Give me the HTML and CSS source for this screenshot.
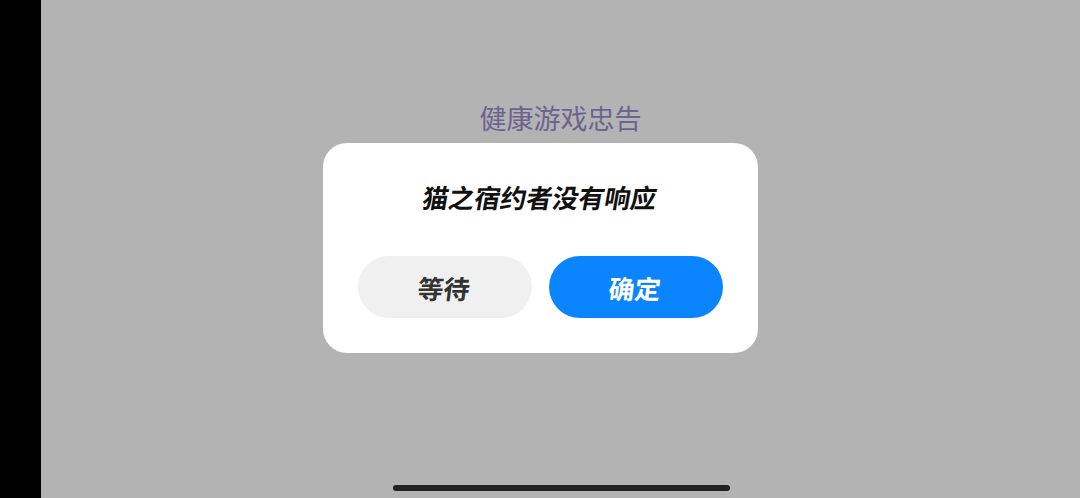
FILE: index.html
```html
<!DOCTYPE html>
<html lang="zh">
<head>
<meta charset="utf-8">
<link rel="stylesheet" href="styles.css">
</head>
<body>
<div class="screen">
  <div class="side"></div>
  <div class="main">
    <div class="heading">健康游戏忠告</div>
    <div class="spacer"></div>
    <div class="home-bar"></div>
  </div>
</div>
<div class="overlay">
  <div class="dialog">
    <div class="dialog-title"><span class="slant">猫之宿约者没有响应</span></div>
    <div class="actions">
      <button class="btn btn-wait"><span class="slant-sm">等待</span></button>
      <button class="btn btn-ok"><span class="slant-sm">确定</span></button>
    </div>
  </div>
</div>
</body>
</html>
```

FILE: styles.css
```css
html, body {
  margin: 0;
  padding: 0;
  width: 1080px;
  height: 498px;
  overflow: hidden;
  font-family: "Noto Sans CJK SC", "Noto Sans", sans-serif;
}
.screen {
  display: flex;
  width: 1080px;
  height: 498px;
  background: #b3b3b3;
}
.side {
  width: 41px;
  background: #000;
  flex: none;
}
.main {
  flex: 1;
  display: flex;
  flex-direction: column;
  align-items: center;
}
.heading {
  padding-top: 103px;
  font-size: 27px;
  line-height: 30px;
  color: #6c6391;
}
.spacer { flex: 1; }
.home-bar {
  width: 337px;
  height: 6px;
  border-radius: 3px;
  background: #222;
  margin-bottom: 7px;
  margin-left: 1px;
}
.overlay {
  position: fixed;
  left: 0;
  top: 0;
  width: 1080px;
  height: 498px;
  display: flex;
  justify-content: center;
  align-items: flex-start;
}
.dialog {
  margin-top: 143px;
  width: 435px;
  box-sizing: border-box;
  padding: 39px 35px 35px;
  background: #fff;
  border-radius: 24px;
  display: flex;
  flex-direction: column;
  align-items: center;
}
.dialog-title {
  font-size: 26px;
  line-height: 30px;
  font-weight: bold;
  color: #111;
}
.slant {
  display: inline-block;
  transform: skewX(-10deg);
}
.slant-sm {
  display: inline-block;
  transform: skewX(-7deg);
}
.actions {
  margin-top: 44px;
  display: flex;
  gap: 17px;
}
.btn {
  width: 174px;
  height: 62px;
  border: none;
  border-radius: 31px;
  font-family: "Noto Sans CJK SC", "Noto Sans", sans-serif;
  font-size: 26px;
  font-weight: bold;
  padding: 0;
}
.btn-wait {
  background: #f0f0f0;
  color: #333;
}
.btn-ok {
  background: #0a84ff;
  color: #fff;
}
```
